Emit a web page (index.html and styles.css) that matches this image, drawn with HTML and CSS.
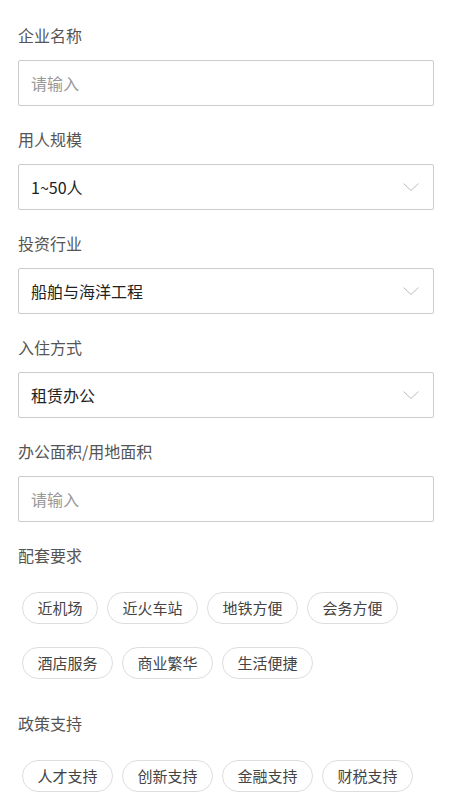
FILE: index.html
```html
<!DOCTYPE html>
<html lang="zh-CN">
<head>
    <meta charset="UTF-8">
    <meta name="viewport" content="width=device-width, initial-scale=1.0">
    <title>企业入驻</title>
    <link rel="stylesheet" href="styles.css">
</head>
<body>
    <div class="form">
        <div class="field">
            <div class="label">企业名称</div>
            <div class="box"><span class="placeholder">请输入</span></div>
        </div>
        <div class="field">
            <div class="label">用人规模</div>
            <div class="box select">
                <span class="value">1~50人</span>
                <svg class="chevron" width="16" height="8" viewBox="0 0 16 8"><path d="M0.5 0.5 L8 7.5 L15.5 0.5" fill="none" stroke="#bbb" stroke-width="1"/></svg>
            </div>
        </div>
        <div class="field">
            <div class="label">投资行业</div>
            <div class="box select">
                <span class="value">船舶与海洋工程</span>
                <svg class="chevron" width="16" height="8" viewBox="0 0 16 8"><path d="M0.5 0.5 L8 7.5 L15.5 0.5" fill="none" stroke="#bbb" stroke-width="1"/></svg>
            </div>
        </div>
        <div class="field">
            <div class="label">入住方式</div>
            <div class="box select">
                <span class="value">租赁办公</span>
                <svg class="chevron" width="16" height="8" viewBox="0 0 16 8"><path d="M0.5 0.5 L8 7.5 L15.5 0.5" fill="none" stroke="#bbb" stroke-width="1"/></svg>
            </div>
        </div>
        <div class="field">
            <div class="label">办公面积/用地面积</div>
            <div class="box"><span class="placeholder">请输入</span></div>
        </div>
        <div class="field tags-field">
            <div class="label tags-label">配套要求</div>
            <div class="tags">
                <span class="tag">近机场</span>
                <span class="tag">近火车站</span>
                <span class="tag">地铁方便</span>
                <span class="tag">会务方便</span>
                <span class="tag">酒店服务</span>
                <span class="tag">商业繁华</span>
                <span class="tag">生活便捷</span>
            </div>
        </div>
        <div class="field tags-field">
            <div class="label tags-label">政策支持</div>
            <div class="tags">
                <span class="tag">人才支持</span>
                <span class="tag">创新支持</span>
                <span class="tag">金融支持</span>
                <span class="tag">财税支持</span>
            </div>
        </div>
    </div>
</body>
</html>
```

FILE: styles.css
```css
body {
    margin: 0;
    background: #fff;
    font-family: "Noto Sans CJK SC", "Noto Sans", sans-serif;
    color: #222;
}
.form {
    padding: 23px 16px 0 18px;
}
.field {
    margin-bottom: 21px;
}
.label {
    font-size: 16px;
    line-height: 24px;
    color: #555;
    margin-bottom: 13px;
}
.box {
    height: 46px;
    box-sizing: border-box;
    border: 1px solid #ccc;
    border-radius: 2px;
    padding: 0 14px 0 12px;
    display: flex;
    align-items: center;
    justify-content: space-between;
    font-size: 16px;
}
.placeholder {
    color: #999;
}
.value {
    color: #222;
}
.chevron {
    display: block;
}
.tags-field {
    margin-bottom: 32px;
}
.tags-label {
    margin-bottom: 25px;
}
.tags {
    display: flex;
    flex-wrap: wrap;
    gap: 23px 9px;
    padding-left: 4px;
}
.tag {
    height: 32px;
    box-sizing: border-box;
    padding: 0 14.5px;
    border: 1px solid #ddd;
    border-radius: 16px;
    font-size: 15px;
    line-height: 30px;
    color: #444;
}
```
